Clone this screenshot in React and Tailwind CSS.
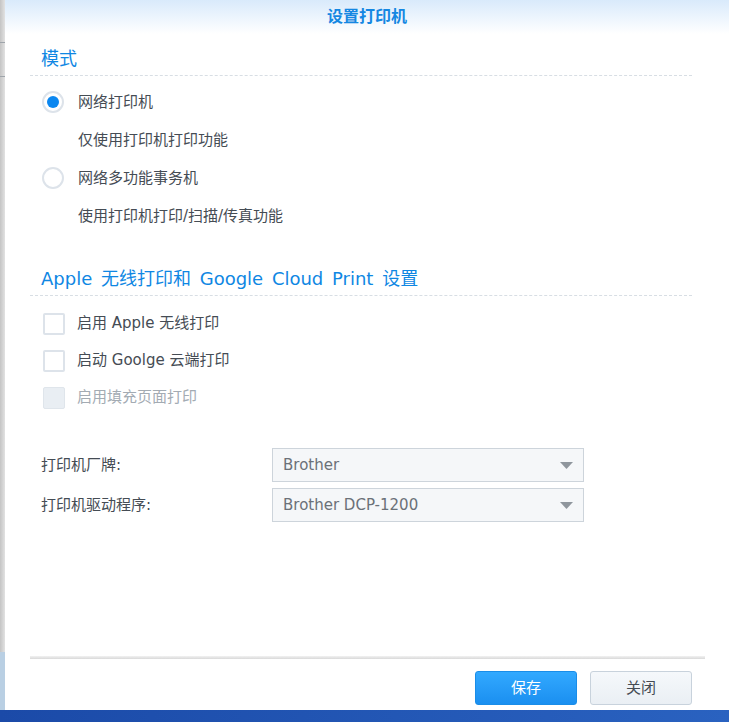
import React from 'react';

const font = { fontFamily: '"DejaVu Sans", "Noto Sans CJK SC", sans-serif' };

const Radio = ({ checked, label }) => (
  <div className="flex h-[38px] items-center">
    <span className="flex h-[22px] w-[22px] items-center justify-center rounded-full border-2 border-[#dde3ea] bg-white">
      {checked && <span className="h-[12px] w-[12px] rounded-full bg-[#0b87f0]" />}
    </span>
    <span className="ml-[14px] text-[15px] text-[#454c54]">{label}</span>
  </div>
);

const Hint = ({ children }) => (
  <div className="flex h-[38px] items-center pl-[36px] text-[15px] text-[#454c54]">{children}</div>
);

const Checkbox = ({ label, disabled }) => (
  <div className="flex h-[37px] items-center">
    <span
      className={
        disabled
          ? 'ml-[2px] h-[22px] w-[22px] rounded-[2px] border border-[#dfe5eb] bg-[#e9eef3]'
          : 'ml-[2px] h-[22px] w-[22px] rounded-[2px] border-2 border-[#dde3ea] bg-white'
      }
    />
    <span className={disabled ? 'ml-[12px] text-[15px] text-[#a3abb3]' : 'ml-[12px] text-[15px] text-[#454c54]'}>
      {label}
    </span>
  </div>
);

const Select = ({ label, value }) => (
  <div className="flex items-center">
    <div className="w-[242px] pl-[11px] text-[15px] text-[#454c54]">{label}</div>
    <div className="flex h-[34px] w-[312px] items-center justify-between border border-[#cdd4db] bg-[#f5f7f9] pl-[10px] pr-[10px]">
      <span className="text-[15px] text-[#6b7178]">{value}</span>
      <svg width="13" height="7" viewBox="0 0 13 7">
        <path d="M0 0 H13 L6.5 7 Z" fill="#8f969d" />
      </svg>
    </div>
  </div>
);

const SectionTitle = ({ children }) => (
  <div className="border-b border-dashed border-[#d8dee4] pb-[4px] pl-[11px] text-[18px] leading-[24px] text-[#0f87e3] [word-spacing:3px]">
    {children}
  </div>
);

export default function App() {
  return (
    <div className="flex h-[722px] w-[729px] flex-col overflow-hidden bg-[#1d4fae]" style={font}>
      <div className="flex h-[710px]">
        <div className="flex w-[5px] flex-col bg-gradient-to-r from-[#c4c4c4] to-[#e2e2e2]">
          <div className="h-[42px]" />
          <div className="h-[1px] bg-[#9ea4aa]" />
          <div className="h-[33px]" />
          <div className="h-[1px] bg-[#9ea4aa]" />
          <div className="flex-1" />
          <div className="h-[58px] bg-[#b9cfe3]" />
        </div>
        <div className="flex flex-1 flex-col bg-white">
          <div className="flex h-[34px] items-center justify-center bg-gradient-to-b from-[#d9eafb] to-white text-[16px] font-bold text-[#1587e2]">
            设置打印机
          </div>
          <div className="flex flex-1 flex-col pl-[25px] pr-[37px]">
            <div className="mt-[13px]">
              <SectionTitle>模式</SectionTitle>
            </div>
            <div className="mt-[7px] pl-[12px]">
              <Radio checked label="网络打印机" />
              <Hint>仅使用打印机打印功能</Hint>
              <Radio label="网络多功能事务机" />
              <Hint>使用打印机打印/扫描/传真功能</Hint>
            </div>
            <div className="mt-[32px]">
              <SectionTitle>Apple 无线打印和 Google Cloud Print 设置</SectionTitle>
            </div>
            <div className="mt-[9px] pl-[11px]">
              <Checkbox label="启用 Apple 无线打印" />
              <Checkbox label="启动 Goolge 云端打印" />
              <Checkbox label="启用填充页面打印" disabled />
            </div>
            <div className="mt-[32px] flex flex-col gap-[6px]">
              <Select label="打印机厂牌:" value="Brother" />
              <Select label="打印机驱动程序:" value="Brother DCP-1200" />
            </div>
          </div>
          <div className="pl-[25px] pr-[24px]">
            <div className="h-[3px] bg-gradient-to-b from-[#f2f2f2] to-[#d9d9d9]" />
          </div>
          <div className="flex justify-end gap-[13px] pb-[5px] pr-[37px] pt-[12px]">
            <button className="h-[34px] w-[102px] rounded-[3px] border border-[#1a8de8] bg-gradient-to-b from-[#32a9ff] to-[#1a8ff0] text-[15px] text-white">
              保存
            </button>
            <button className="h-[34px] w-[102px] rounded-[3px] border border-[#c8d2dc] bg-gradient-to-b from-[#f5f8fb] to-[#eaeff4] text-[15px] text-[#454c54]">
              关闭
            </button>
          </div>
        </div>
      </div>
      <div className="flex-1 bg-gradient-to-r from-[#1b4aa8] to-[#2a62c0]" />
    </div>
  );
}
